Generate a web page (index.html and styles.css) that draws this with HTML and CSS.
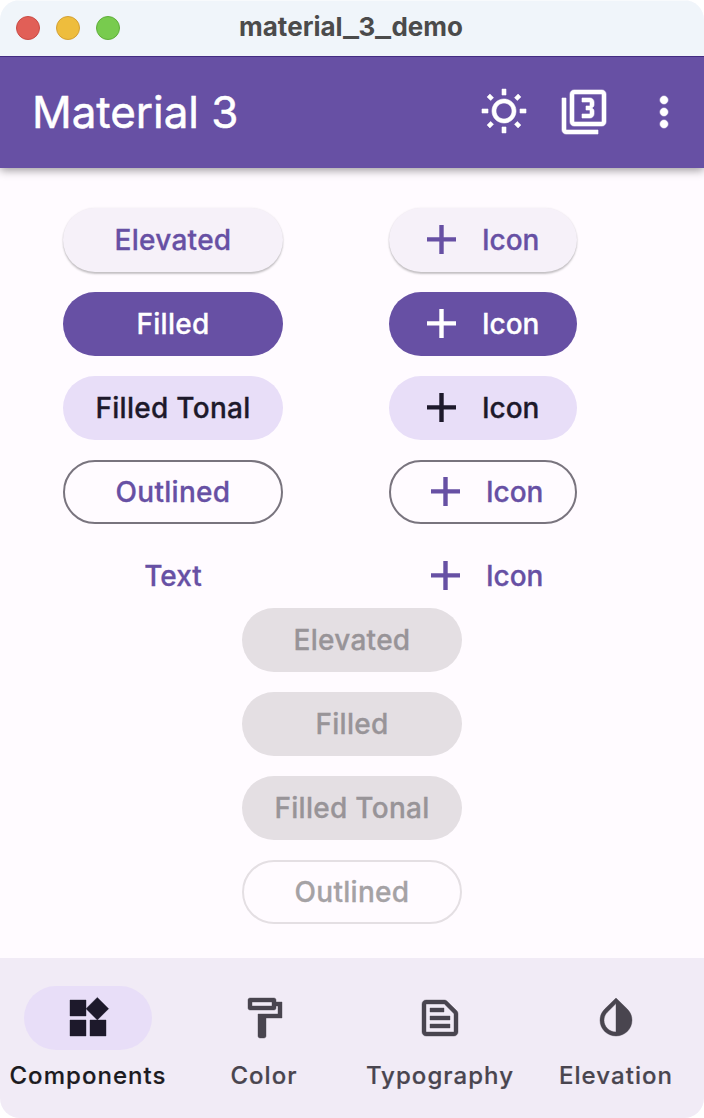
FILE: index.html
```html
<!DOCTYPE html>
<html lang="en">
<head>
<meta charset="utf-8">
<title>material_3_demo</title>
<link rel="stylesheet" href="styles.css">
</head>
<body>
<svg class="defs" aria-hidden="true">
  <symbol id="plus" viewBox="0 0 29 29"><path d="M12.3 0h4.4v12.2H29v4.4H16.7V29h-4.4V16.6H0v-4.4h12.3z"/></symbol>
</svg>
<div class="window">
  <header class="titlebar">
    <div class="lights"><span class="light red"></span><span class="light yellow"></span><span class="light green"></span></div>
    <span class="window-title">material<span class="wide">_</span>3<span class="wide">_</span>demo</span>
  </header>
  <div class="appbar">
    <h1 class="app-title">Material 3</h1>
    <div class="actions">
      <svg class="icon" viewBox="0 0 24 24"><path d="M6.76 4.84l-1.8-1.79-1.41 1.41 1.79 1.79 1.42-1.41zM4 10.5H1v2h3v-2zm9-9.95h-2V3.5h2V.55zm7.45 3.91l-1.41-1.41-1.79 1.79 1.41 1.41 1.79-1.79zm-3.21 13.7l1.79 1.8 1.41-1.41-1.8-1.79-1.4 1.4zM20 10.5v2h3v-2h-3zm-8-5c-3.31 0-6 2.69-6 6s2.69 6 6 6 6-2.69 6-6-2.69-6-6-6zm0 10c-2.21 0-4-1.79-4-4s1.79-4 4-4 4 1.79 4 4-1.79 4-4 4zm-1 6.95h2V19.5h-2v2.95zm-7.45-3.91l1.41 1.41 1.79-1.8-1.41-1.41-1.79 1.8z"/></svg>
      <svg class="icon" viewBox="0 0 24 24"><path d="M21 1H7c-1.1 0-2 .9-2 2v14c0 1.1.9 2 2 2h14c1.1 0 2-.9 2-2V3c0-1.1-.9-2-2-2zm0 16H7V3h14v14zM3 5H1v16c0 1.1.9 2 2 2h16v-2H3V5zm14 8v-1.5c0-.83-.67-1.5-1.5-1.5.83 0 1.5-.67 1.5-1.5V7c0-1.11-.9-2-2-2h-4v2h4v2h-2v2h2v2h-4v2h4c1.1 0 2-.89 2-2z"/></svg>
      <svg class="icon" viewBox="0 0 24 24"><path d="M12 8c1.1 0 2-.9 2-2s-.9-2-2-2-2 .9-2 2 .9 2 2 2zm0 2c-1.1 0-2 .9-2 2s.9 2 2 2 2-.9 2-2-.9-2-2-2zm0 6c-1.1 0-2 .9-2 2s.9 2 2 2 2-.9 2-2-.9-2-2-2z"/></svg>
    </div>
  </div>
  <main class="content">
    <div class="pairs">
      <div class="column">
        <div class="btn elevated">Elevated</div>
        <div class="btn filled">Filled</div>
        <div class="btn tonal">Filled Tonal</div>
        <div class="btn outlined">Outlined</div>
        <div class="btn text">Text</div>
      </div>
      <div class="column with-icon">
        <div class="btn elevated"><svg class="plus"><use href="#plus"/></svg>Icon</div>
        <div class="btn filled"><svg class="plus"><use href="#plus"/></svg>Icon</div>
        <div class="btn tonal"><svg class="plus"><use href="#plus"/></svg>Icon</div>
        <div class="btn outlined"><svg class="plus"><use href="#plus"/></svg>Icon</div>
        <div class="btn text"><svg class="plus"><use href="#plus"/></svg>Icon</div>
      </div>
    </div>
    <div class="column disabled">
      <div class="btn">Elevated</div>
      <div class="btn">Filled</div>
      <div class="btn">Filled Tonal</div>
      <div class="btn outlined">Outlined</div>
    </div>
  </main>
  <nav class="nav">
    <div class="dest selected">
      <div class="pill"><svg class="icon" viewBox="0 0 24 24"><path d="M13 13v8h8v-8h-8zM3 21h8v-8H3v8zM3 3v8h8V3H3zm13.66-1.31L11 7.34 16.66 13l5.66-5.66-5.66-5.65z"/></svg></div>
      <span class="label">Components</span>
    </div>
    <div class="dest">
      <div class="pill"><svg class="icon" viewBox="0 0 24 24"><path d="M18 4V3c0-.55-.45-1-1-1H5c-.55 0-1 .45-1 1v4c0 .55.45 1 1 1h12c.55 0 1-.45 1-1V6h1v4H9v11c0 .55.45 1 1 1h2c.55 0 1-.45 1-1v-9h8V4h-3zm-2 2H6V4h10v2z"/></svg></div>
      <span class="label">Color</span>
    </div>
    <div class="dest">
      <div class="pill"><svg class="icon" viewBox="0 0 24 24"><path d="M14.17 5L19 9.83V19H5V5h9.17m0-2H5c-1.1 0-2 .9-2 2v14c0 1.1.9 2 2 2h14c1.1 0 2-.9 2-2V9.83c0-.53-.21-1.04-.59-1.41l-4.83-4.83c-.37-.38-.88-.59-1.41-.59zM7 15h10v2H7v-2zm0-4h10v2H7v-2zm0-4h7v2H7V7z"/></svg></div>
      <span class="label">Typography</span>
    </div>
    <div class="dest">
      <div class="pill"><svg class="icon" viewBox="0 0 24 24"><path d="M12 4.81V19c-3.31 0-6-2.63-6-5.87 0-1.56.62-3.03 1.75-4.14L12 4.81M6.35 7.56C4.9 8.99 4 10.96 4 13.13 4 17.48 7.58 21 12 21c4.42 0 8-3.52 8-7.87 0-2.17-.9-4.14-2.35-5.57L12 2 6.35 7.56z"/></svg></div>
      <span class="label">Elevation</span>
    </div>
  </nav>
</div>
</body>
</html>
```
FILE: styles.css
```css
* { box-sizing: border-box; }
body { margin: 0; background: #fff; font-family: Inter, Roboto, sans-serif; }
.defs { display: none; }
.window {
  display: flex;
  flex-direction: column;
  width: 704px;
  height: 1118px;
  border-radius: 20px;
  overflow: hidden;
  background: #fffbff;
}
.titlebar {
  position: relative;
  z-index: 1;
  display: grid;
  grid-template-columns: 120px 1fr 120px;
  align-items: center;
  height: 56px;
  padding: 0 0 0 16px;
  background: #f0f5fa;
  box-shadow: inset 0 1px 0 #f8fafc;
}
.lights { display: flex; gap: 16px; }
.light { width: 24px; height: 24px; border-radius: 50%; border: 1px solid; }
.red { background: #e15f57; border-color: #c94b45; }
.yellow { background: #eebd3d; border-color: #d3a034; }
.green { background: #78cb4e; border-color: #5fae3a; }
.window-title {
  justify-self: center;
  margin: -2px 18px 0 0;
  font-size: 26px;
  font-weight: 700;
  line-height: 32px;
  letter-spacing: 0;
  color: #4b4b4b;
  white-space: nowrap;
}
.wide { display: inline-block; width: 16px; text-align: center; transform: scaleX(1.3); }
.appbar {
  display: flex;
  align-items: center;
  justify-content: space-between;
  flex: 0 0 112px;
  padding: 0 16px 1px 32px;
  background: #6750a4;
  border-top: 1px solid #432c82;
  color: #fff;
  box-shadow: 0 2px 9px rgba(0, 0, 0, 0.42);
}
.app-title { margin: 0; font-size: 44px; font-weight: 400; line-height: 56px; letter-spacing: -0.05px; -webkit-text-stroke: 0.5px currentColor; white-space: nowrap; }
.actions { display: flex; gap: 32px; }
.icon { display: block; width: 48px; height: 48px; fill: currentColor; stroke: currentColor; stroke-width: 0.3; }
.content { flex: 1; padding-top: 40px; }
.pairs { display: flex; gap: 106.4px; padding-left: 63px; }
.column { display: flex; flex-direction: column; gap: 20px; width: 220px; }
.with-icon { width: 188px; }
.btn {
  display: flex;
  align-items: center;
  justify-content: center;
  height: 64px;
  border-radius: 32px;
  font-size: 28px;
  font-weight: 500;
  line-height: 40px;
  letter-spacing: 0.28px;
  -webkit-text-stroke: 0.3px currentColor;
  color: #6750a4;
  white-space: nowrap;
}
.text, .with-icon .btn { letter-spacing: 0; }
.with-icon .btn { justify-content: flex-start; gap: 26px; padding-left: 37.5px; }
.with-icon .outlined { padding-left: 39.5px; }
.with-icon .text { padding-left: 41.5px; }
.plus { width: 29px; height: 29px; margin-top: -1px; fill: currentColor; }
.elevated { background: #f6f1f9; box-shadow: 0 2px 2px rgba(0, 0, 0, 0.22), 0 0 2px rgba(0, 0, 0, 0.08); }
.filled { background: #6750a4; color: #fff; }
.tonal { background: #e8def8; color: #1d192b; }
.outlined { border: 2px solid #79747e; }
.disabled { margin: 0 auto; }
.disabled .btn { background: #e4dfe3; color: #989498; }
.disabled .outlined { background: none; border-color: #e4dfe3; color: #a5a2a5; }
.nav { display: grid; grid-template-columns: repeat(4, 1fr); flex: 0 0 160px; background: #f1ebf6; color: #49454f; }
.nav .icon { stroke-width: 0.2; }
.dest { display: flex; flex-direction: column; align-items: center; padding-top: 28px; }
.pill { display: flex; align-items: center; justify-content: center; width: 128px; height: 64px; border-radius: 32px; }
.selected .pill { background: #e8def8; color: #1d192b; }
.label { margin-top: 10px; font-size: 24px; font-weight: 500; line-height: 32px; letter-spacing: 1.05px; -webkit-text-stroke: 0.2px currentColor; white-space: nowrap; }
.selected .label { color: #1c1b1f; }
```
